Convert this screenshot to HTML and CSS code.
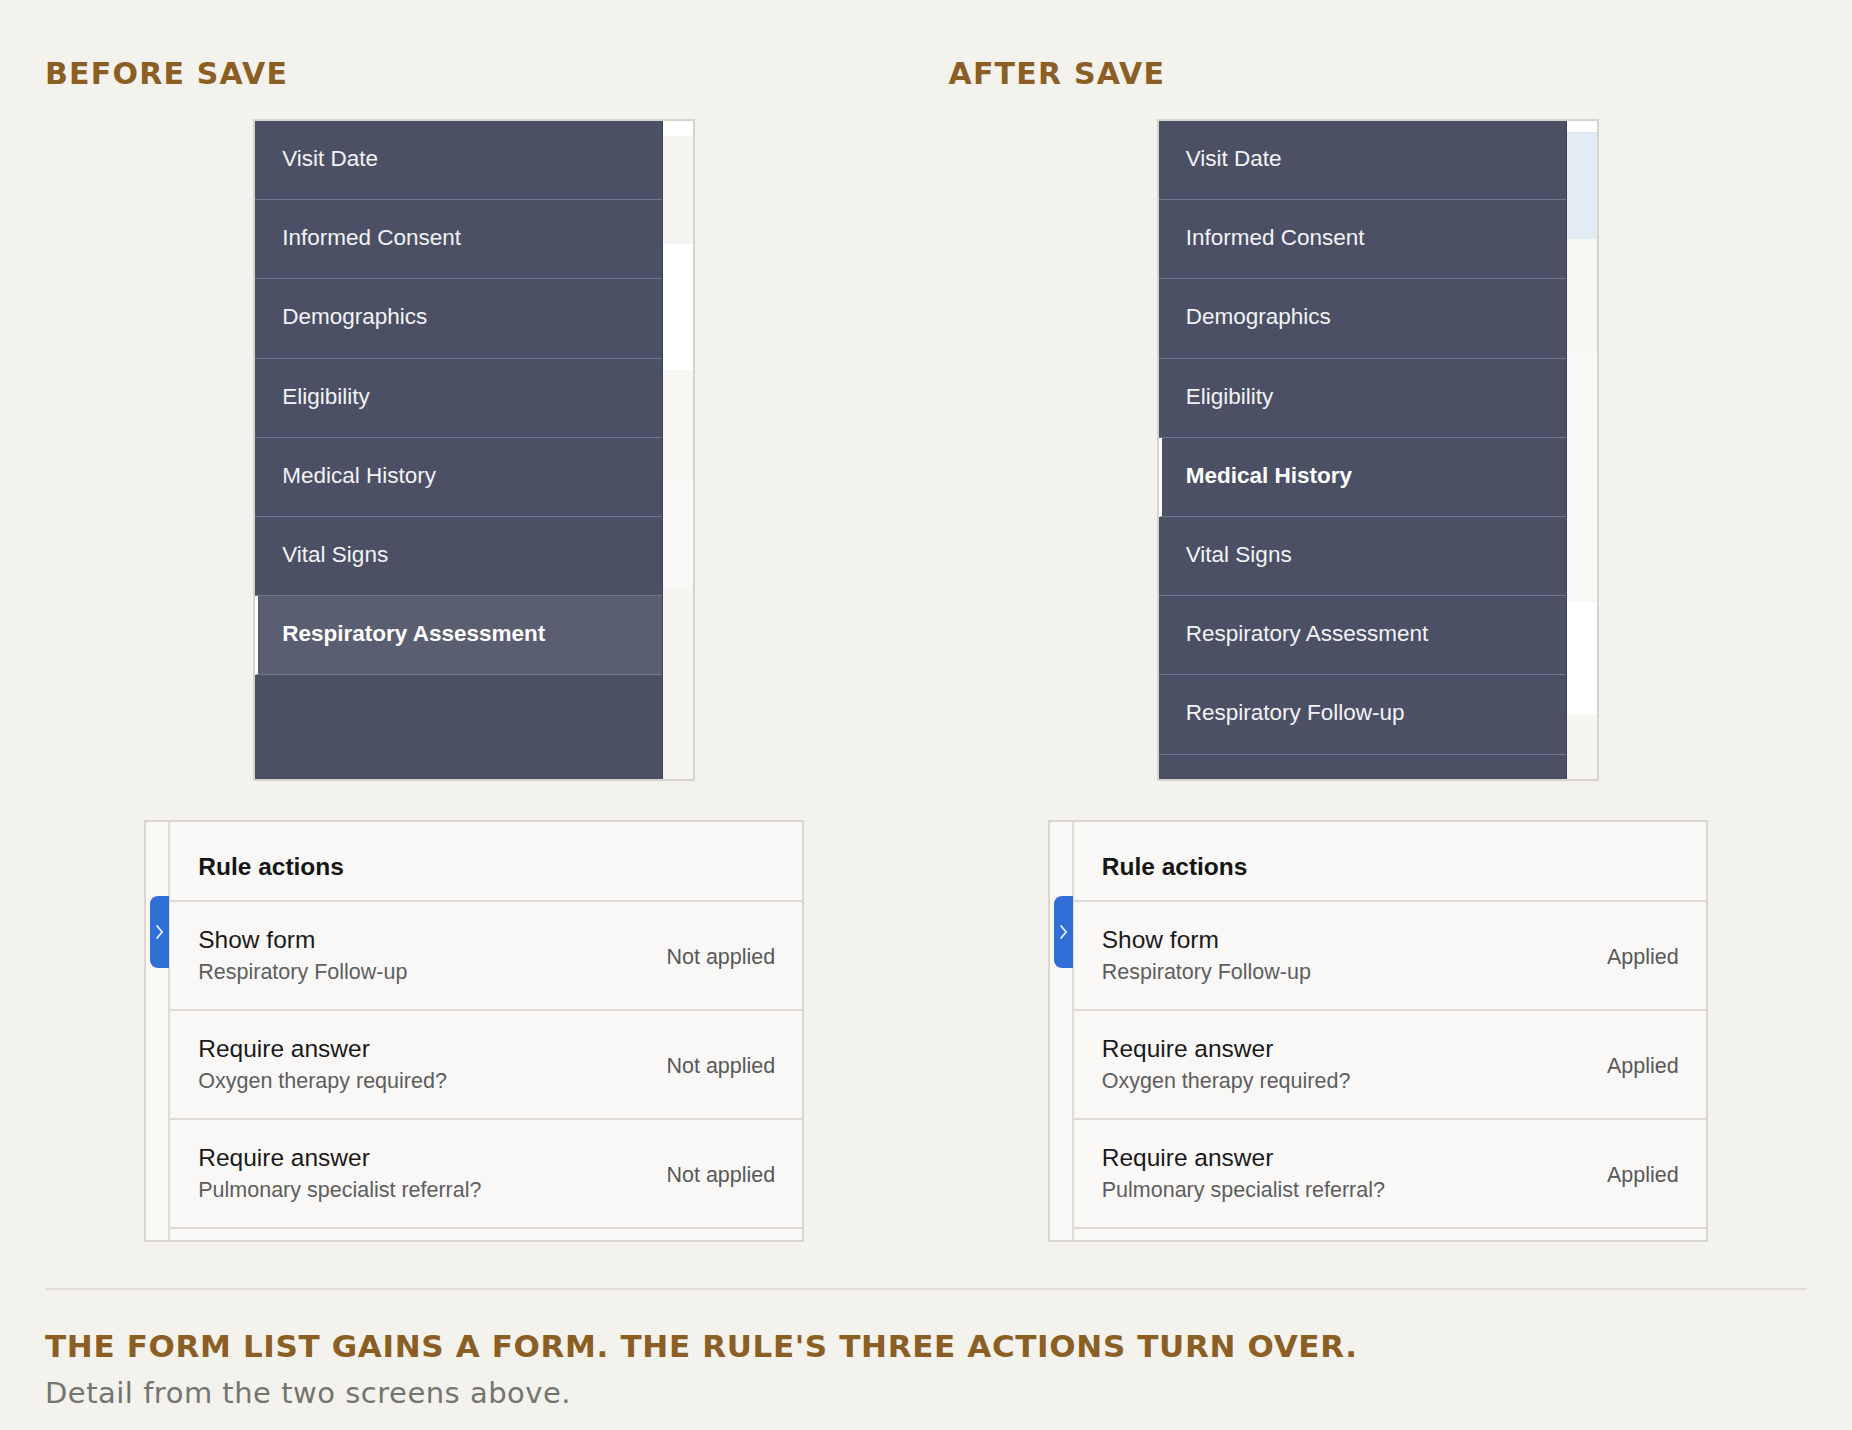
FILE: index.html
```html
<!DOCTYPE html>
<html lang="en">
<head>
    <meta charset="UTF-8">
    <meta name="viewport" content="width=device-width, initial-scale=1.0">
    <title>Before and after save</title>
    <link rel="stylesheet" href="styles.css">
</head>
<body>
    <main class="page">
        <div class="compare">
            <section class="shot">
                <h2 class="shot-title">BEFORE SAVE</h2>
                <div class="form-nav">
                    <ul class="form-list">
                        <li class="form-item">Visit Date</li>
                        <li class="form-item">Informed Consent</li>
                        <li class="form-item">Demographics</li>
                        <li class="form-item">Eligibility</li>
                        <li class="form-item">Medical History</li>
                        <li class="form-item">Vital Signs</li>
                        <li class="form-item form-item-selected">Respiratory Assessment</li>
                    </ul>
                    <div class="scroll-strip strip-before"></div>
                </div>
                <div class="rule-panel">
                    <div class="rule-gutter"></div>
                    <span class="rule-tab">
                        <svg width="9" height="16" viewBox="0 0 9 16"><path d="M1.6 1.4 L7.2 8 L1.6 14.6" fill="none" stroke="#fff" stroke-width="1.5"/></svg>
                    </span>
                    <div class="rule-body">
                        <div class="rule-head">Rule actions</div>
                        <div class="rule-row">
                            <div class="rule-text">
                                <div class="rule-name">Show form</div>
                                <div class="rule-target">Respiratory Follow-up</div>
                            </div>
                            <span class="rule-status">Not applied</span>
                        </div>
                        <div class="rule-row">
                            <div class="rule-text">
                                <div class="rule-name">Require answer</div>
                                <div class="rule-target">Oxygen therapy required?</div>
                            </div>
                            <span class="rule-status">Not applied</span>
                        </div>
                        <div class="rule-row">
                            <div class="rule-text">
                                <div class="rule-name">Require answer</div>
                                <div class="rule-target">Pulmonary specialist referral?</div>
                            </div>
                            <span class="rule-status">Not applied</span>
                        </div>
                    </div>
                </div>
            </section>

            <section class="shot">
                <h2 class="shot-title">AFTER SAVE</h2>
                <div class="form-nav">
                    <ul class="form-list">
                        <li class="form-item">Visit Date</li>
                        <li class="form-item">Informed Consent</li>
                        <li class="form-item">Demographics</li>
                        <li class="form-item">Eligibility</li>
                        <li class="form-item form-item-current">Medical History</li>
                        <li class="form-item">Vital Signs</li>
                        <li class="form-item">Respiratory Assessment</li>
                        <li class="form-item">Respiratory Follow-up</li>
                        <li class="form-item"></li>
                    </ul>
                    <div class="scroll-strip strip-after"></div>
                </div>
                <div class="rule-panel">
                    <div class="rule-gutter"></div>
                    <span class="rule-tab">
                        <svg width="9" height="16" viewBox="0 0 9 16"><path d="M1.6 1.4 L7.2 8 L1.6 14.6" fill="none" stroke="#fff" stroke-width="1.5"/></svg>
                    </span>
                    <div class="rule-body">
                        <div class="rule-head">Rule actions</div>
                        <div class="rule-row">
                            <div class="rule-text">
                                <div class="rule-name">Show form</div>
                                <div class="rule-target">Respiratory Follow-up</div>
                            </div>
                            <span class="rule-status">Applied</span>
                        </div>
                        <div class="rule-row">
                            <div class="rule-text">
                                <div class="rule-name">Require answer</div>
                                <div class="rule-target">Oxygen therapy required?</div>
                            </div>
                            <span class="rule-status">Applied</span>
                        </div>
                        <div class="rule-row">
                            <div class="rule-text">
                                <div class="rule-name">Require answer</div>
                                <div class="rule-target">Pulmonary specialist referral?</div>
                            </div>
                            <span class="rule-status">Applied</span>
                        </div>
                    </div>
                </div>
            </section>
        </div>

        <hr class="divider">
        <p class="caption">THE FORM LIST GAINS A FORM. THE RULE'S THREE ACTIONS TURN OVER.</p>
        <p class="subcaption">Detail from the two screens above.</p>
    </main>
</body>
</html>
```

FILE: styles.css
```css
body {
    margin: 0;
    background-color: #f4f2ec;
    font-family: "Liberation Sans", Arial, sans-serif;
}
.page {
    padding: 56px 45px 0;
}
.compare {
    display: grid;
    grid-template-columns: 1fr 1fr;
    column-gap: 45px;
}
.shot {
    display: flex;
    flex-direction: column;
    align-items: center;
}
.shot-title {
    align-self: flex-start;
    margin: 0;
    font-family: "DejaVu Sans", sans-serif;
    font-weight: bold;
    font-size: 30px;
    line-height: 35px;
    letter-spacing: 1.2px;
    color: #8b5e24;
}

/* form list */
.form-nav {
    display: flex;
    width: 442px;
    height: 662px;
    box-sizing: border-box;
    margin-top: 28px;
    border: 2px solid #d6d4cc;
    background-color: #fbfaf8;
}
.form-list {
    flex: 0 0 407px;
    margin: 0;
    padding: 0;
    list-style: none;
    overflow: hidden;
    background-color: #4b5064;
    border-right: 1px solid #3f4356;
}
.form-item {
    display: flex;
    align-items: center;
    height: 79.2px;
    box-sizing: border-box;
    padding: 0 0 2px 27px;
    border-bottom: 1px solid #737890;
    font-size: 22.5px;
    color: #f2f3f6;
}
.form-item-selected {
    background-color: #5a5e71;
    border-left: 3px solid #ffffff;
    padding-left: 24px;
    font-weight: bold;
    color: #ffffff;
}
.form-item-current {
    border-left: 3px solid #ffffff;
    padding-left: 24px;
    font-weight: bold;
    color: #ffffff;
}
.scroll-strip {
    flex: 1;
}
.strip-before {
    background: linear-gradient(to bottom,
        #ffffff 0 15px,
        #f6f5f2 15px 123px,
        #ffffff 123px 249px,
        #f7f6f3 249px 358px,
        #f9f8f6 358px 466px,
        #f6f5f1 466px);
}
.strip-after {
    background: linear-gradient(to bottom,
        #ffffff 0 11px,
        #dbe3ea 11px 12px,
        #e2ecf5 12px 118px,
        #f7f6f3 118px 230px,
        #f9f8f6 230px 481px,
        #ffffff 481px 594px,
        #f6f5f2 594px);
}

/* rule actions */
.rule-panel {
    position: relative;
    display: flex;
    width: 660px;
    height: 422px;
    box-sizing: border-box;
    margin-top: 39px;
    border: 2px solid #d8d6cf;
    background-color: #f9f8f6;
    overflow: hidden;
}
.rule-gutter {
    flex: 0 0 22px;
    border-right: 2px solid #dddbd4;
}
.rule-tab {
    position: absolute;
    left: 4px;
    top: 74px;
    width: 19px;
    height: 72px;
    display: flex;
    align-items: center;
    justify-content: center;
    border-radius: 8px 0 0 8px;
    background-color: #2f6fd6;
}
.rule-body {
    flex: 1;
}
.rule-head {
    height: 80px;
    box-sizing: border-box;
    padding: 31px 29px 0 28px;
    border-bottom: 2px solid #dddbd4;
    font-weight: bold;
    font-size: 24.5px;
    color: #151515;
}
.rule-row {
    display: flex;
    align-items: center;
    justify-content: space-between;
    height: 109px;
    box-sizing: border-box;
    padding: 0 27px 0 28px;
    border-bottom: 2px solid #dddbd4;
}
.rule-name {
    font-size: 24.5px;
    color: #1a1a1a;
}
.rule-target {
    margin-top: 6px;
    font-size: 21.5px;
    color: #5e5e5e;
}
.rule-status {
    padding-top: 4px;
    font-size: 21.5px;
    color: #585858;
}

/* caption */
.divider {
    margin: 46px 0 0;
    border: 0;
    border-top: 2px solid #dfddd6;
}
.caption {
    margin: 38px 0 0;
    font-family: "DejaVu Sans", sans-serif;
    font-weight: bold;
    font-size: 31px;
    line-height: 36px;
    letter-spacing: 0.65px;
    color: #8b5e24;
}
.subcaption {
    margin: 12px 0 0;
    font-family: "DejaVu Sans", sans-serif;
    font-size: 29px;
    line-height: 34px;
    letter-spacing: 0.5px;
    color: #75756f;
}
```
